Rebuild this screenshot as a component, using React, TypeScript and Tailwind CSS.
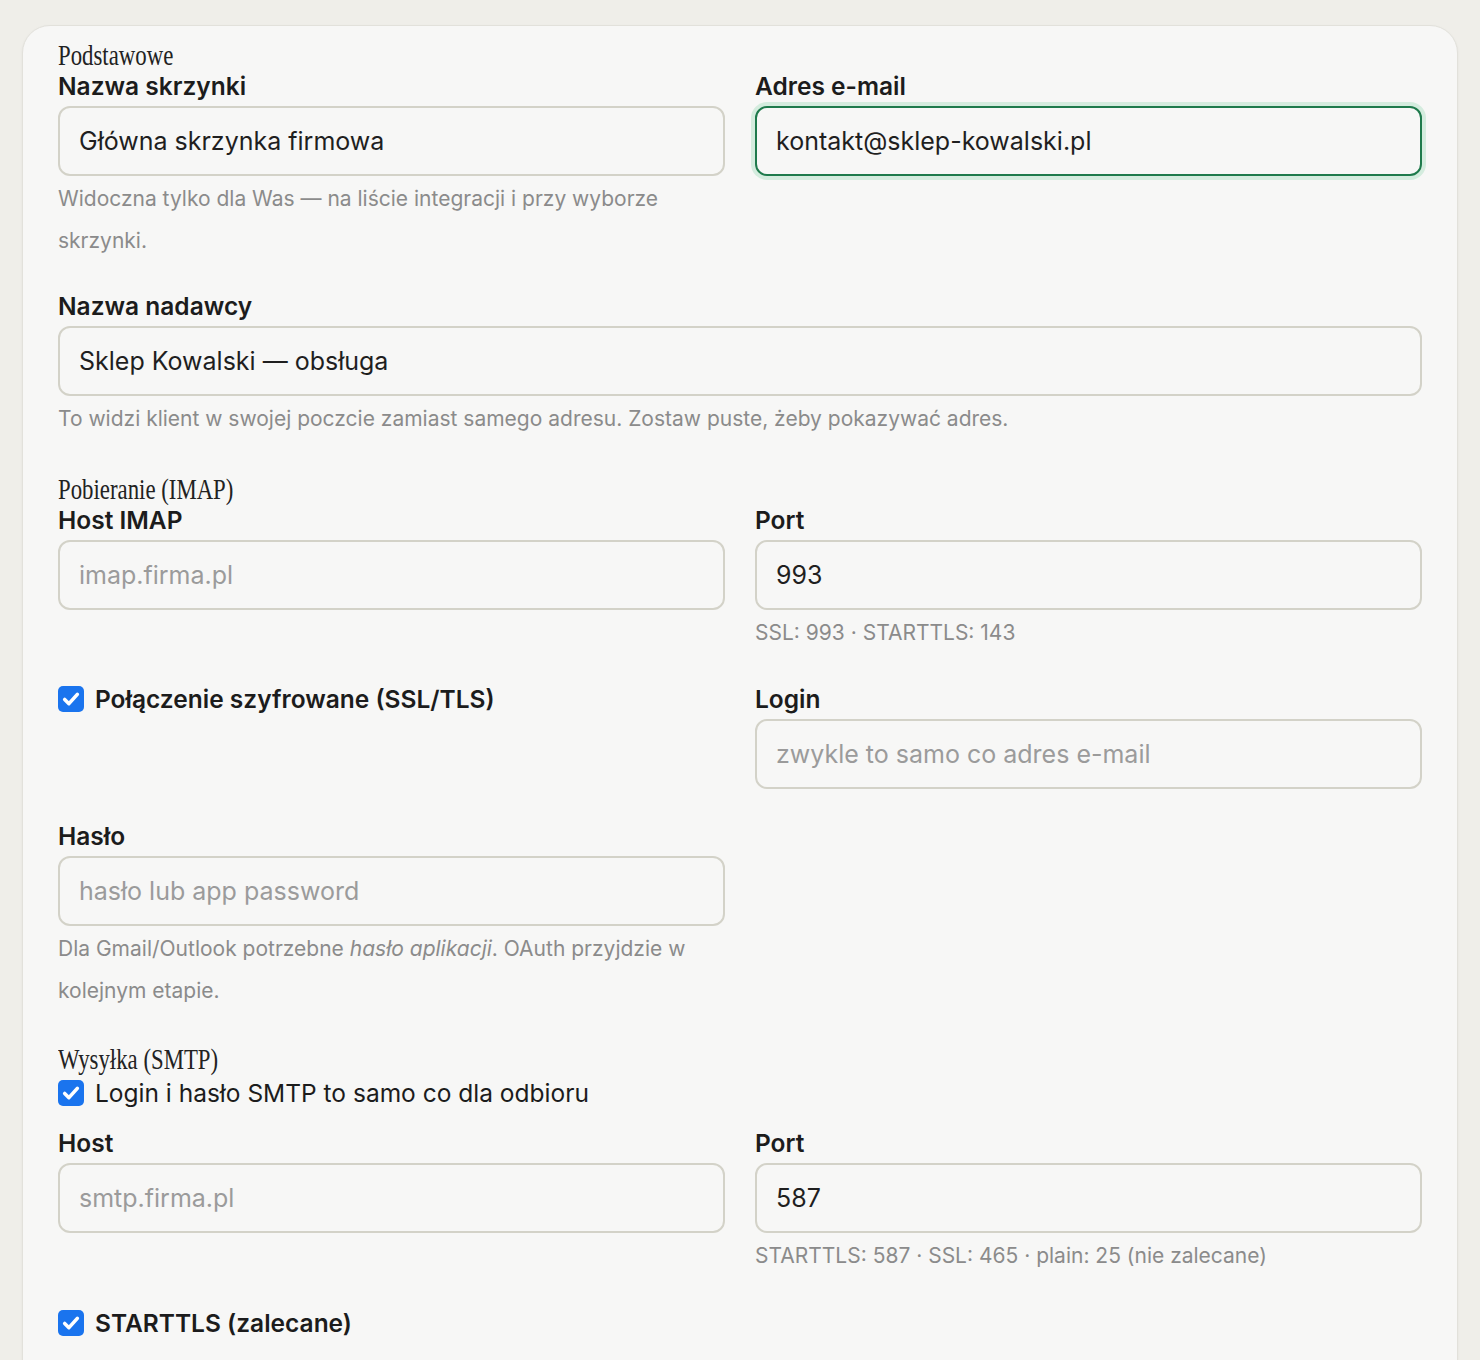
import React from "react";

const sans = "font-['Inter','Liberation_Sans',sans-serif]";

function SectionTitle({ children }: { children: React.ReactNode }) {
  return (
    <h3 className="h-[33px] leading-[33px] text-[30px] text-[#222] font-['Liberation_Serif',serif] font-normal">
      <span className="inline-block origin-left scale-x-[0.76] whitespace-nowrap">
        {children}
      </span>
    </h3>
  );
}

function Field({
  label,
  value,
  placeholder,
  hint,
  focused,
}: {
  label: string;
  value?: string;
  placeholder?: string;
  hint?: React.ReactNode;
  focused?: boolean;
}) {
  return (
    <div className="flex flex-col">
      <label className="text-[24.5px] leading-[30px] font-semibold text-[#1c1c1c] mb-[5px]">
        {label}
      </label>
      <input
        defaultValue={value}
        placeholder={placeholder}
        className={
          "h-[70px] w-full rounded-[12px] border-2 bg-[#f7f7f6] px-[19px] text-[25px] text-[#1f1f1f] placeholder:text-[#9b9b9b] outline-none " +
          (focused
            ? "border-[#1f7a4c] ring-4 ring-[#d4ecde]"
            : "border-[#d3d2c8]")
        }
      />
      {hint && (
        <p className="mt-[2px] text-[21px] leading-[42px] text-[#8b8b8b]">
          {hint}
        </p>
      )}
    </div>
  );
}

function Check({ label, bold }: { label: string; bold?: boolean }) {
  return (
    <label className="flex items-center gap-[11px] cursor-pointer">
      <span className="flex h-[26px] w-[26px] shrink-0 items-center justify-center rounded-[5px] bg-[#1a74ee]">
        <svg viewBox="0 0 16 16" className="h-[22px] w-[22px]" fill="none">
          <path
            d="M3.4 8.3l3.1 3.1 6.1-6.8"
            stroke="white"
            strokeWidth="2.6"
            strokeLinecap="round"
            strokeLinejoin="round"
          />
        </svg>
      </span>
      <span
        className={
          "text-[24.5px] leading-[30px] text-[#1c1c1c] " +
          (bold ? "font-semibold" : "font-normal")
        }
      >
        {label}
      </span>
    </label>
  );
}

export default function App() {
  return (
    <div className={"min-h-screen bg-[#efeee9] px-[22px] pt-[25px] " + sans}>
      <div className="rounded-t-[28px] border border-[#e2e1db] bg-[#f7f7f6] px-[35px] pt-[12px] pb-[80px] shadow-[0_1px_3px_rgba(0,0,0,0.05)]">
        <section>
          <SectionTitle>Podstawowe</SectionTitle>
          <div className="grid grid-cols-2 gap-x-[30px] gap-y-[29px]">
            <Field
              label="Nazwa skrzynki"
              value="Główna skrzynka firmowa"
              hint="Widoczna tylko dla Was — na liście integracji i przy wyborze skrzynki."
            />
            <Field
              label="Adres e-mail"
              value="kontakt@sklep-kowalski.pl"
              focused
            />
            <div className="col-span-2">
              <Field
                label="Nazwa nadawcy"
                value="Sklep Kowalski — obsługa"
                hint="To widzi klient w swojej poczcie zamiast samego adresu. Zostaw puste, żeby pokazywać adres."
              />
            </div>
          </div>
        </section>

        <section className="mt-[32px]">
          <SectionTitle>Pobieranie (IMAP)</SectionTitle>
          <div className="grid grid-cols-2 gap-x-[30px] gap-y-[30px]">
            <Field label="Host IMAP" placeholder="imap.firma.pl" />
            <Field label="Port" value="993" hint="SSL: 993 · STARTTLS: 143" />
            <div>
              <Check label="Połączenie szyfrowane (SSL/TLS)" bold />
            </div>
            <Field label="Login" placeholder="zwykle to samo co adres e-mail" />
            <div className="col-span-1 pt-[2px]">
              <Field
                label="Hasło"
                placeholder="hasło lub app password"
                hint={
                  <>
                    Dla Gmail/Outlook potrzebne <em>hasło aplikacji</em>. OAuth
                    przyjdzie w kolejnym etapie.
                  </>
                }
              />
            </div>
          </div>
        </section>

        <section className="mt-[30px]">
          <SectionTitle>Wysyłka (SMTP)</SectionTitle>
          <div className="mt-[3px]">
            <Check label="Login i hasło SMTP to samo co dla odbioru" />
          </div>
          <div className="mt-[20px] grid grid-cols-2 gap-x-[30px] gap-y-[31px]">
            <Field label="Host" placeholder="smtp.firma.pl" />
            <Field
              label="Port"
              value="587"
              hint="STARTTLS: 587 · SSL: 465 · plain: 25 (nie zalecane)"
            />
            <div className="col-span-2">
              <Check label="STARTTLS (zalecane)" bold />
            </div>
          </div>
        </section>
      </div>
    </div>
  );
}
